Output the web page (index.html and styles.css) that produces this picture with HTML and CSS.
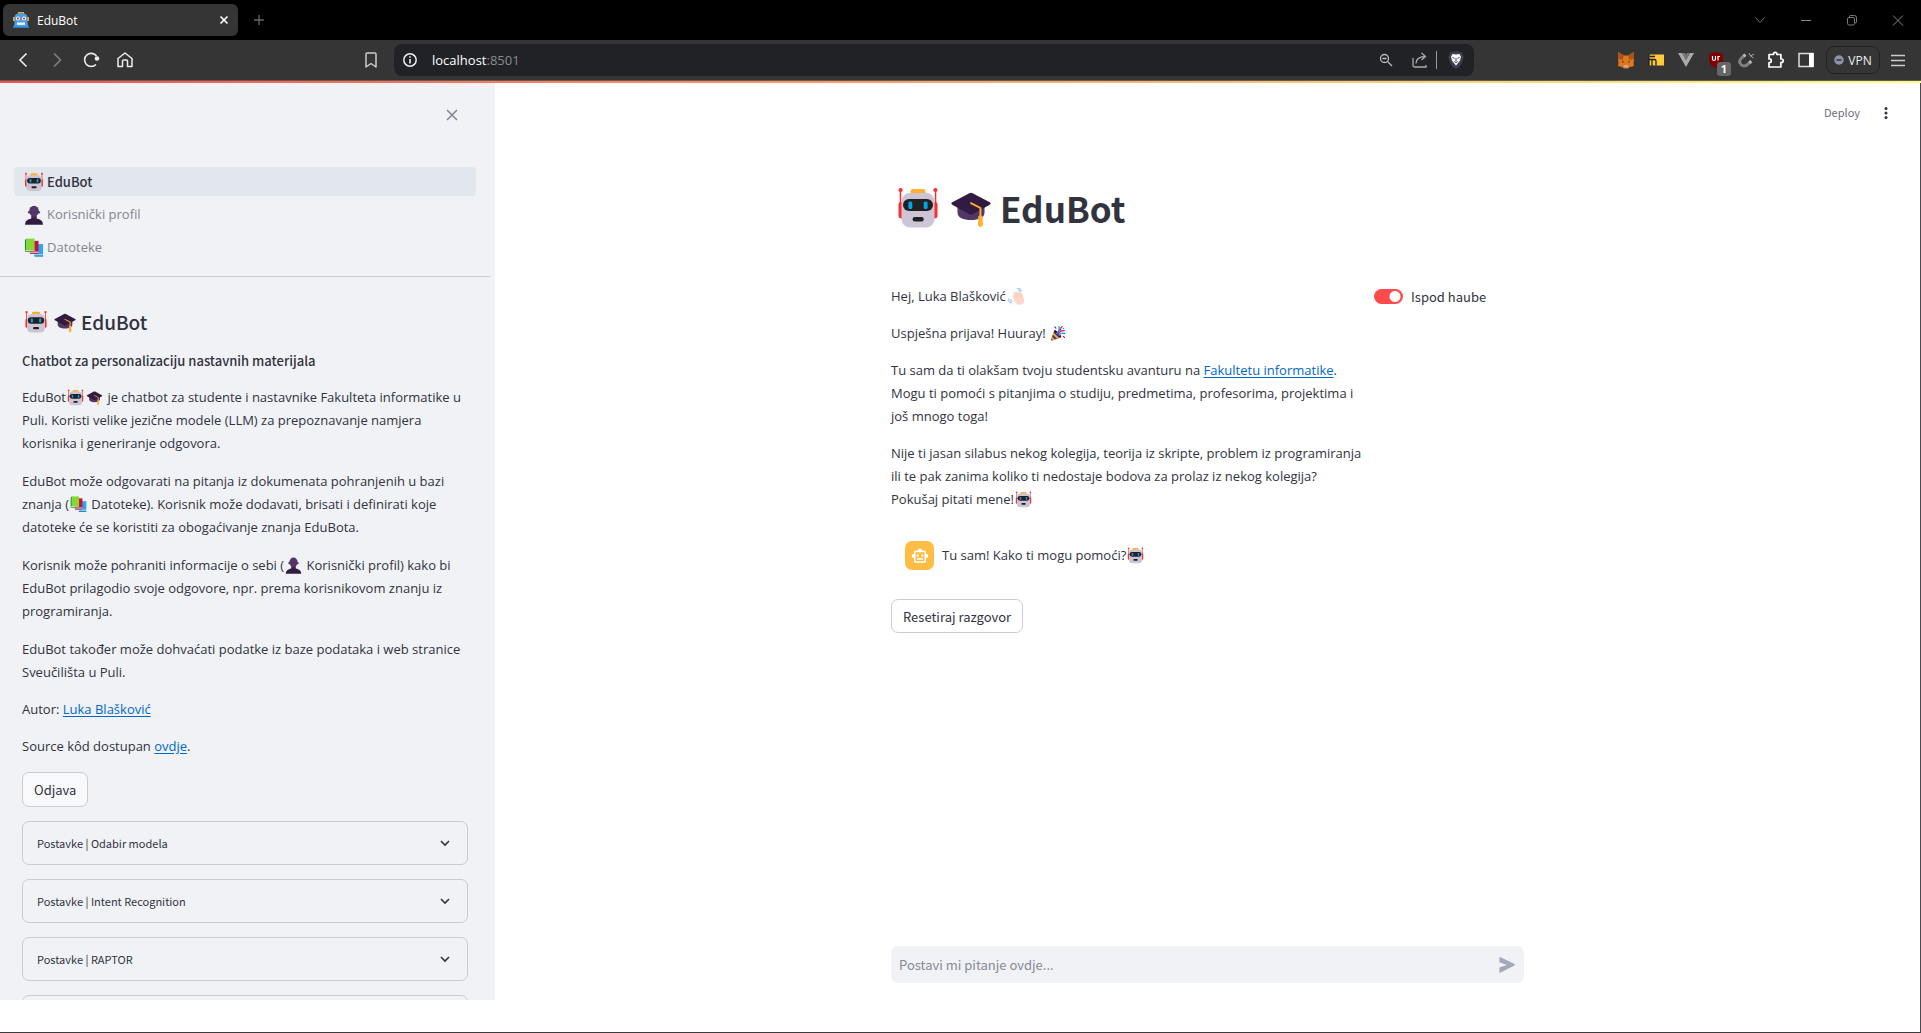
FILE: index.html
```html
<!DOCTYPE html>
<html lang="hr">
<head>
<meta charset="utf-8">
<meta name="viewport" content="width=device-width, initial-scale=1">
<title>EduBot</title>
<link rel="stylesheet" href="styles.css">
</head>
<body>
<svg class="sprite" aria-hidden="true">
  <symbol id="e-robot" viewBox="0 0 32 32">
    <path d="M4.3 4v11M27.7 4v11" stroke="#f8312f" stroke-width="1" fill="none"/>
    <circle cx="4.4" cy="4" r="1.4" fill="#f8312f"/><circle cx="27.6" cy="4" r="1.4" fill="#f8312f"/>
    <rect x="3" y="12" width="4" height="11" rx="1.6" fill="#f8312f"/><rect x="25" y="12" width="4" height="11" rx="1.6" fill="#f8312f"/>
    <rect x="11" y="3.4" width="10" height="5" rx="1.6" fill="#ffb02e"/>
    <rect x="5" y="6" width="22" height="23" rx="5.5" fill="#cdc4d6"/>
    <rect x="6" y="10" width="20" height="8" rx="4" fill="#212121"/>
    <rect x="9.6" y="11.6" width="2.6" height="5" rx="1" fill="#00a6ed"/><rect x="19.8" y="11.6" width="2.6" height="5" rx="1" fill="#00a6ed"/>
    <rect x="12.4" y="22" width="7.4" height="3" rx="1.4" fill="#212121"/>
  </symbol>
  <symbol id="e-cap" viewBox="0 0 32 32">
    <path d="M7 12v7c0 3.500 4 5 9 5s9-1.500 9-5v-7z" fill="#533566"/>
    <path d="M3.500 12.200 14.900 6.100a2.400 2.400 0 0 1 2.200 0l11.400 6.100c.8.400.8 1.200 0 1.600l-11.400 6.300a2.400 2.400 0 0 1-2.200 0L3.500 13.800c-.8-.4-.8-1.200 0-1.600z" fill="#321b41"/>
    <path d="M16 12.800 22.300 16v7" stroke="#ffb02e" stroke-width="1.300" stroke-linecap="round" fill="none"/>
    <path d="M20.700 22.500c0-2.300 3.200-2.300 3.200 0 0 1-.3 1.500-.2 2.300.8 2.400-.2 3.700-1.400 3.700s-2.200-1.300-1.400-3.700c.1-.8-.2-1.300-.2-2.300z" fill="#ffb02e"/>
  </symbol>
  <symbol id="e-bust" viewBox="0 0 32 32">
    <path d="M12 17h8v6h-8z" fill="#432a54"/>
    <ellipse cx="16" cy="10.500" rx="7" ry="8" fill="#533566"/>
    <circle cx="9" cy="12" r="1.800" fill="#533566"/><circle cx="23" cy="12" r="1.800" fill="#533566"/>
    <path d="M3 30c0-5.500 3.500-7.500 9-9h8c5.500 1.500 9 3.500 9 9z" fill="#321b41"/>
  </symbol>
  <symbol id="e-books" viewBox="-1 0 34 34">
    <path d="M17 11h13v15.500H17z" fill="#26a9f0"/><path d="M16 26.500h14V30H17.500z" fill="#8ec6e8"/><path d="M16 28.600h14V30H17z" fill="#0074ba"/>
    <path d="M10 6h13v17H10z" fill="#ca0b4a"/><path d="M8.500 22.500H23V26H10z" fill="#e7aac3"/><path d="M9 24.800h14V26H10z" fill="#990838"/>
    <path d="M2 4.500 3.500 3H5v17H3.500L2 21.500z" fill="#008463"/><path d="M3.500 2.500H17V20H3.500z" fill="#86d72f"/><path d="M2 20h15v2.400H2z" fill="#b8d9a0"/><path d="M2 21.800h15v1.200H2z" fill="#44911b"/>
  </symbol>
  <symbol id="e-wave" viewBox="-2 0 32 32">
    <path d="M11 13 10 9.500c-.5-2 2-2.800 3-1l.8 1.500c.5-2.500 3-2.600 4-.8 1.500-1.600 3.600-.9 4.200.8 1.900-.8 3.300.4 3.700 2l2.600 8c1.700 6-2 10-7 10-4.500 0-7-2.500-8.700-6.200L9.500 18c-.8-2.400.6-4 1.500-5z" fill="#fdd8c8"/>
    <path d="M14 10.500l2.600 7M18 9.500l2.600 7M22 10.500l2 6" stroke="#f3b7a3" stroke-width=".8" fill="none"/>
    <path d="M17 3c3-1.500 6 .5 6.500 3.500M19 6c1.300-.3 2.200.3 2.600 1.500M2.500 20c-.6 3.500 1.600 6.500 5 7M6 20.500c-.2 1.800.6 3 2.200 3.600" stroke="#9bc2fb" stroke-width="1.800" stroke-linecap="round" fill="none"/>
  </symbol>
  <symbol id="e-party" viewBox="-1 -2 36 36">
    <path d="M9 10 3 27c-.5 1.700.8 2.700 2.200 2.200L22 23c2-1-10-15-13-13z" fill="#533566"/>
    <path d="M9 10c-1.200 2.500 9.500 15 13 13 1-3-10-15.500-13-13z" fill="#1c1230"/>
    <path d="m7.500 14-1.300 4 8.200 8 3.600-1.300zM4.700 22l-1.200 3.600 3.400 3 3.400-1.200z" fill="#ffb02e"/>
    <path d="M13.500 16c4-3 6-7 4.500-13M18 20c1-4 5-6 11-4" stroke="#00a6ed" stroke-width="2.600" stroke-linecap="round" fill="none"/>
    <path d="M16 18c2-6 6-8 12-7.500" stroke="#f70a8d" stroke-width="2.600" stroke-linecap="round" fill="none"/>
    <path d="M10 3.500 12 6M21.500 5l2.500-2M20 10l1.500-3M26 21.500l2.500 2" stroke="#ca0b4a" stroke-width="2.200" stroke-linecap="round" fill="none"/>
    <circle cx="26.500" cy="6.500" r="1.400" fill="#00a6ed"/><circle cx="22" cy="16" r="1.300" fill="#ffb02e"/>
  </symbol>
  <symbol id="i-down" viewBox="0 0 16 16"><path d="m4 6 4 4 4-4" fill="none" stroke="currentColor" stroke-width="1.600"/></symbol>
</svg>

<header class="browser">
  <div class="tabs">
    <div class="tab">
      <svg class="icon16" viewBox="0 0 16 16"><path d="M0 5h16v4H0z" fill="#f6a32f"/><path d="M5 0h6v3H5z" fill="#f6a32f"/><path d="M1.500 5Q2 1 8 1t6.500 4v7l1.500 4H0l1.500-4z" fill="#4a9fe0"/><circle cx="5" cy="6.500" r="2" fill="#fff"/><circle cx="11" cy="6.500" r="2" fill="#fff"/><circle cx="5" cy="6.500" r="1.100" fill="#e0242c"/><circle cx="11" cy="6.500" r="1.100" fill="#e0242c"/><path d="M4 10.500h8v2.400H4z" fill="#e9f2fa"/><path d="M0 14.500h16V16H0z" fill="#2d7fc4"/></svg>
      <span class="tab-name">EduBot</span>
      <button class="plain" aria-label="Zatvori karticu"><svg class="icon16" viewBox="0 0 16 16"><path d="m4.500 4.500 7 7m0-7-7 7" stroke="#fff" stroke-width="1.700"/></svg></button>
    </div>
    <button class="plain new-tab" aria-label="Nova kartica"><svg class="icon16" viewBox="0 0 16 16"><path d="M8 3v10M3 8h10" stroke="#666" stroke-width="1.300"/></svg></button>
    <div class="window-controls">
      <button class="plain" aria-label="Pretraži kartice"><svg class="icon16" viewBox="0 0 16 16"><path d="m3.500 5.500 4.500 5 4.500-5" fill="none" stroke="#777"/></svg></button>
      <button class="plain" aria-label="Smanji"><svg class="icon16" viewBox="0 0 16 16"><path d="M3 8.500h10" stroke="#888"/></svg></button>
      <button class="plain" aria-label="Vrati"><svg class="icon16" viewBox="0 0 16 16"><g fill="none" stroke="#777"><rect x="3.500" y="5.500" width="7" height="7.500" rx="1.500"/><path d="M5.500 5.500V4Q5.500 3.500 7 3.500h3.500q2 0 2 2V10q0 1-1.500 1"/></g></svg></button>
      <button class="plain" aria-label="Zatvori"><svg class="icon16" viewBox="0 0 16 16"><path d="m3 3.500 10 10m0-10-10 10" stroke="#888"/></svg></button>
    </div>
  </div>
  <div class="toolbar">
    <nav class="nav-buttons" aria-label="Navigacija preglednika">
      <button class="plain" aria-label="Natrag"><svg class="icon18" viewBox="0 0 18 18"><path d="M12.500 2.500 6 9l6.500 6.500" fill="none" stroke="#eee" stroke-width="1.600"/></svg></button>
      <button class="plain" aria-label="Naprijed"><svg class="icon18" viewBox="0 0 18 18"><path d="M6 2.500 12.500 9 6 15.500" fill="none" stroke="#808080" stroke-width="1.600"/></svg></button>
      <button class="plain" aria-label="Osvježi"><svg class="icon18" viewBox="0 0 18 18"><path d="M14 13.500A6.600 6.600 0 1 1 14.500 5" fill="none" stroke="#eee" stroke-width="1.600"/><circle cx="15" cy="7.500" r="2.300" fill="#eee"/></svg></button>
      <button class="plain" aria-label="Početna"><svg class="icon18" viewBox="0 0 18 18"><path d="M2 7.500 9 2l7 5.500v8h-4.500V10q0-1-1-1h-3q-1 0-1 1v5.500H2z" fill="none" stroke="#eee" stroke-width="1.500" stroke-linejoin="round"/></svg></button>
    </nav>
    <div class="location">
      <button class="plain" aria-label="Dodaj oznaku"><svg class="icon18" viewBox="0 0 18 18"><path d="M4 3q0-1 1-1h8q1 0 1 1v13l-5-3.500L4 16z" fill="none" stroke="#ccc" stroke-width="1.500" stroke-linejoin="round"/></svg></button>
      <div class="address">
        <svg class="icon16" viewBox="0 0 16 16"><circle cx="8" cy="8" r="6.200" fill="none" stroke="#eee" stroke-width="1.500"/><path d="M8 7v4.500M8 4.300v1.500" stroke="#eee" stroke-width="1.600"/></svg>
        <span class="url">localhost<span class="port">:8501</span></span>
        <button class="plain" aria-label="Povećanje"><svg class="icon16" viewBox="0 0 16 16"><g fill="none" stroke="#bbb" stroke-width="1.300"><circle cx="6.500" cy="6.500" r="4"/><path d="M4.500 6.500h4M9.500 9.500 14 14"/></g></svg></button>
        <button class="plain share" aria-label="Dijeli"><svg class="icon18" viewBox="0 0 18 18"><path d="M2 7v7.500q0 1.500 1.500 1.500H15v-2M5 12.500q0-6.500 9-7M10.500 2l4 3.500-4 3.500" fill="none" stroke="#aaa" stroke-width="1.300"/></svg></button>
        <button class="plain brave" aria-label="Brave Shields"><svg class="icon18" viewBox="0 0 18 18"><path d="M3 1.500 9 0l6 1.500 1.500 4Q16 14 9 18 2 14 1.500 5.500z" fill="#3e3f52"/><path d="m5.500 3 3.500.5 3.500-.5 1.500 3-1.300 4L9 14.500 5.300 10 4 6z" fill="#fff"/><path d="m5.500 6.500 2 .8m5-.8-2 .8M9 7v3m-1.800.5 1.800 1 1.800-1" stroke="#3e3f52" fill="none"/></svg></button>
      </div>
    </div>
    <div class="extensions">
      <button class="plain" aria-label="MetaMask"><svg class="icon18" viewBox="0 0 18 18"><path d="m1 1 6 3.500h4L17 1v7l-.5 4 .5 3-4 1-2 1.500H7L5 16l-4-1 .5-3L1 8z" fill="#e2761b"/><path d="m1 1 6 3.500L5.500 9 1 8zM17 1l-6 3.500L12.500 9 17 8z" fill="#a8541b"/><path d="m5.500 9.500 2 2-2.200-.3zm7 0-2 2 2.200-.3z" fill="#233447"/><path d="M7 14h4l.5 2.500H6.500z" fill="#c0ad9e"/></svg></button>
      <button class="plain" aria-label="Bilješke"><svg class="icon18" viewBox="0 0 18 18"><path d="M2 3.500h15v11H2z" fill="#ffc83d"/><path d="M2 3v12M2 8.500h5.500q1.500 0 1.500 1.500v4.500M5 9v6M3 5.500h5" fill="none" stroke="#222" stroke-width="1.300"/></svg></button>
      <button class="plain" aria-label="Vue"><svg class="icon18" viewBox="0 0 18 18"><path d="M1 2h4l4 7 4-7h4L9 16z" fill="#aaa"/><path d="M5 2h3l1 2 1-2h3L9 9z" fill="#777"/></svg></button>
      <button class="plain blocker" aria-label="uBlock"><svg class="icon18" viewBox="0 0 18 18"><path d="m9 1 7 2v6q0 5-7 8-7-3-7-8V3z" fill="#800000"/><path d="M5.500 5v3q0 1.500 1.500 1.500T8.500 8V5M11 9.500v-4h2" fill="none" stroke="#fff" stroke-width="1.200"/></svg><span class="count">1</span></button>
      <button class="plain" aria-label="Magnet"><svg class="icon18" viewBox="0 0 18 18"><path d="M8 4 4.500 7q-3.500 3.500-.5 6.500t6.500 0L14 10.500" fill="none" stroke="#808080" stroke-width="3"/><path d="M8.500 3.500 6.500 5.300m7.800 4.900-2 1.800" stroke="#b5b5b5" stroke-width="3"/><path d="m12 2 1.500 3M17 3l-3.500 2 3 2" fill="none" stroke="#aaa"/></svg></button>
      <button class="plain" aria-label="Proširenja"><svg class="icon18" viewBox="0 0 18 18"><path d="M2 3.500h4.500V3a1.700 1.700 0 0 1 3.400 0v.5h4V8h.6a1.700 1.700 0 0 1 0 3.400h-.6v4.600H2v-4.500h.5a1.800 1.800 0 0 0 0-3.600H2z" fill="none" stroke="#fff" stroke-width="1.700" stroke-linejoin="round"/></svg></button>
      <button class="plain" aria-label="Bočna traka"><svg class="icon18" viewBox="0 0 18 18"><path d="M2 2.500h14v13H2z" fill="none" stroke="#ddd" stroke-width="1.500"/><path d="M12 2h4.700v14H12z" fill="#fff"/></svg></button>
      <button class="vpn"><svg viewBox="0 0 12 12" width="10" height="10"><circle cx="6" cy="6" r="5.700" fill="#8e92ab"/><path d="M3 6h6" stroke="#353535" stroke-width="1.800"/></svg>VPN</button>
      <button class="plain menu" aria-label="Izbornik"><svg class="icon18" viewBox="0 0 18 18"><path d="M2 4.500h14M2 9.500h14M2 14.500h14" stroke="#ccc" stroke-width="1.400"/></svg></button>
    </div>
  </div>
</header>

<div class="app">
  <aside class="sidebar">
    <div class="sidebar-top"><button class="plain" aria-label="Zatvori bočnu traku"><svg class="icon16" viewBox="0 0 16 16"><path d="m3 3 10 10M13 3 3 13" stroke="#808495" stroke-width="1.500"/></svg></button></div>
    <nav class="pages" aria-label="Stranice">
      <a class="page active" href="#"><svg class="emoji"><use href="#e-robot"/></svg>EduBot</a>
      <a class="page" href="#profil"><svg class="emoji"><use href="#e-bust"/></svg>Korisnički profil</a>
      <a class="page" href="#datoteke"><svg class="emoji"><use href="#e-books"/></svg>Datoteke</a>
    </nav>
    <hr>
    <div class="sidebar-body">
      <h2><svg class="emoji"><use href="#e-robot"/></svg><svg class="emoji"><use href="#e-cap"/></svg>EduBot</h2>
      <p class="lead">Chatbot za personalizaciju nastavnih materijala</p>
      <div class="about">
        <p>EduBot<svg class="emoji"><use href="#e-robot"/></svg><svg class="emoji"><use href="#e-cap"/></svg> je chatbot za studente i nastavnike Fakulteta informatike u Puli. Koristi velike jezične modele (LLM) za prepoznavanje namjera korisnika i generiranje odgovora.</p>
        <p>EduBot može odgovarati na pitanja iz dokumenata pohranjenih u bazi znanja (<svg class="emoji"><use href="#e-books"/></svg> Datoteke). Korisnik može dodavati, brisati i definirati koje datoteke će se koristiti za obogaćivanje znanja EduBota.</p>
        <p>Korisnik može pohraniti informacije o sebi (<svg class="emoji"><use href="#e-bust"/></svg> Korisnički profil) kako bi EduBot prilagodio svoje odgovore, npr. prema korisnikovom znanju iz programiranja.</p>
        <p>EduBot također može dohvaćati podatke iz baze podataka i web stranice Sveučilišta u Puli.</p>
      </div>
      <p>Autor: <a href="#autor">Luka Blašković</a></p>
      <p>Source kôd dostupan <a href="#kod">ovdje</a>.</p>
      <button class="btn">Odjava</button>
      <details class="expander"><summary>Postavke | Odabir modela<svg class="icon16"><use href="#i-down"/></svg></summary></details>
      <details class="expander"><summary>Postavke | Intent Recognition<svg class="icon16"><use href="#i-down"/></svg></summary></details>
      <details class="expander"><summary>Postavke | RAPTOR<svg class="icon16"><use href="#i-down"/></svg></summary></details>
      <details class="expander"><summary aria-label="Postavke"></summary></details>
    </div>
  </aside>

  <main class="main">
    <div class="main-top">
      <button class="plain deploy">Deploy</button>
      <button class="plain" aria-label="Izbornik aplikacije"><svg class="icon16" viewBox="0 0 16 16" fill="#31333f"><circle cx="8" cy="3.500" r="1.500"/><circle cx="8" cy="8" r="1.500"/><circle cx="8" cy="12.500" r="1.500"/></svg></button>
    </div>
    <div class="content">
      <h1><svg class="emoji"><use href="#e-robot"/></svg><svg class="emoji"><use href="#e-cap"/></svg>EduBot</h1>
      <div class="columns">
        <div class="intro">
          <p>Hej, Luka Blašković<svg class="emoji"><use href="#e-wave"/></svg></p>
          <p>Uspješna prijava! Huuray! <svg class="emoji"><use href="#e-party"/></svg></p>
          <p>Tu sam da ti olakšam tvoju studentsku avanturu na <a href="#fipu">Fakultetu informatike</a>. Mogu ti pomoći s pitanjima o studiju, predmetima, profesorima, projektima i još mnogo toga!</p>
          <p>Nije ti jasan silabus nekog kolegija, teorija iz skripte, problem iz programiranja ili te pak zanima koliko ti nedostaje bodova za prolaz iz nekog kolegija? Pokušaj pitati mene!<svg class="emoji"><use href="#e-robot"/></svg></p>
        </div>
        <label class="toggle"><input type="checkbox" checked>Ispod haube</label>
      </div>
      <div class="message">
        <span class="avatar"><svg class="icon18" viewBox="0 0 24 24"><path fill="#fff" fill-rule="evenodd" d="M20 9V7c0-1.100-.9-2-2-2h-3c0-1.660-1.340-3-3-3S9 3.340 9 5H6c-1.100 0-2 .9-2 2v2c-1.660 0-3 1.340-3 3s1.340 3 3 3v4c0 1.100.9 2 2 2h12c1.100 0 2-.9 2-2v-4c1.660 0 3-1.340 3-3s-1.340-3-3-3zm-2 10H6V7h12v12zm-9-6c-.83 0-1.500-.67-1.500-1.500S8.170 10 9 10s1.500.67 1.500 1.500S9.830 13 9 13zm7.500-1.500c0 .83-.67 1.500-1.500 1.500s-1.500-.67-1.500-1.500.67-1.500 1.500-1.500 1.500.67 1.500 1.500zM8 15h8v2H8v-2z"/></svg></span>
        <p>Tu sam! Kako ti mogu pomoći?<svg class="emoji"><use href="#e-robot"/></svg></p>
      </div>
      <button class="btn">Resetiraj razgovor</button>
      <form class="chat-input">
        <input type="text" placeholder="Postavi mi pitanje ovdje..." aria-label="Pitanje">
        <button class="plain" type="button" aria-label="Pošalji"><svg class="icon18" viewBox="0 0 18 18"><path d="M1.500 1.500Q1 1 2 1l14.500 7q1 .8 0 1.600L2 16.800q-1 0-.6-1.200v-4L9 9 1.400 6.300z" fill="#a3a8b8"/></svg></button>
      </form>
    </div>
  </main>
</div>
</body>
</html>
```
FILE: styles.css
```css
:root {
  --ink: #31333f;
  --panel: #f0f2f6;
  --line: #cbccd2;
  --link: #0068c9;
  --prose: "Open Sans", "Noto Sans", sans-serif;
  --ui: "Noto Sans CJK SC", "Noto Sans", sans-serif;
}

* { box-sizing: border-box; }

body {
  margin: 0;
  height: 100vh;
  display: flex;
  flex-direction: column;
  overflow: hidden;
  background: #fff;
  color: var(--ink);
  font: 13px/23px var(--prose);
}

p, h1, h2 { margin: 0; }
a { color: var(--link); text-underline-offset: 2px; }
svg { flex: none; }

.sprite { position: absolute; width: 0; height: 0; }
.icon16 { width: 16px; height: 16px; display: block; }
.icon18 { width: 18px; height: 18px; display: block; }
.emoji { width: 19px; height: 19px; vertical-align: -5px; }

.plain {
  display: flex;
  align-items: center;
  justify-content: center;
  padding: 0;
  border: 0;
  background: none;
  color: inherit;
  font: inherit;
}

/* Browser frame */
.browser { flex: none; color: #fff; font-size: 12px; }
.tabs {
  display: flex;
  align-items: center;
  height: 40px;
  padding-left: 3px;
  background: #000;
}
.tab {
  display: flex;
  align-items: center;
  gap: 8px;
  width: 235px;
  height: 32px;
  padding: 0 6px 0 10px;
  border-radius: 6px;
  background: #353535;
}
.tab-name { flex: 1; }
.new-tab { margin-left: 13px; }
.window-controls { display: flex; margin-left: auto; }
.window-controls .plain { width: 46px; height: 40px; }

.toolbar {
  display: grid;
  grid-template-columns: 358fr 1116fr 447fr;
  height: 43px;
  padding-bottom: 3px;
  background:
    linear-gradient(90deg, #ff4b4b, #fffd80) bottom / 100% 2px no-repeat,
    linear-gradient(#5c5c5c, #5c5c5c) 0 40px / 100% 1px no-repeat,
    #353535;
}
.nav-buttons, .location, .extensions { display: flex; align-items: center; min-width: 0; }
.nav-buttons { gap: 16px; padding-left: 14px; }
.location { gap: 14px; padding-left: 4px; }
.address {
  flex: 1;
  display: flex;
  align-items: center;
  height: 32px;
  padding: 0 9px 0 8px;
  border-radius: 8px;
  background: #212226;
}
.url { flex: 1; padding-left: 14px; font-size: 13px; }
.port { color: #8b8b8b; }
.share { margin: 0 7px 0 17px; }
.brave { padding-left: 10px; border-left: 1px solid #999; }
.extensions { justify-content: flex-end; padding-right: 5px; }
.extensions .plain { width: 30px; height: 32px; }
.blocker { position: relative; }
.count {
  position: absolute;
  right: 0;
  bottom: 0;
  width: 14px;
  height: 14px;
  border-radius: 3px;
  background: #666;
  font: bold 11px/14px var(--prose);
}
.vpn {
  display: flex;
  align-items: center;
  justify-content: center;
  gap: 4px;
  width: 54px;
  height: 28px;
  margin-left: 5px;
  padding: 0;
  border: 1px solid #232323;
  border-radius: 8px;
  background: none;
  color: #eee;
  font: 12px var(--prose);
}
.extensions .menu { width: 36px; }

/* App */
.app {
  flex: 1;
  min-height: 0;
  display: grid;
  grid-template-columns: 495px minmax(0, 1fr);
  padding-bottom: 32px;
  border-right: 1px solid #4a4a50;
  border-bottom: 1px solid #3c3a3a;
}
.sidebar { overflow: hidden; background: var(--panel); }
.sidebar-top {
  display: flex;
  justify-content: flex-end;
  height: 84px;
  padding: 24px 35px 0 0;
}
.sidebar-top .plain { height: 16px; }
.pages { display: grid; gap: 4px; padding: 0 19px 0 14px; }
.page {
  display: flex;
  align-items: center;
  gap: 2px;
  height: 29px;
  padding-left: 9px;
  border-radius: 4px;
  color: #85868e;
  text-decoration: none;
}
.page .emoji { width: 22px; height: 22px; }
.page.active { background: #e2e6ed; color: var(--ink); font-family: var(--ui); font-weight: 500; }
hr { width: 490px; margin: 14px 0 0; border: 0; border-top: 1px solid var(--line); }

.sidebar-body {
  display: flex;
  flex-direction: column;
  align-items: stretch;
  gap: 14px;
  padding: 32px 27px 0 22px;
}
.sidebar-body .btn { align-self: flex-start; }
h2 {
  display: flex;
  align-items: center;
  gap: 3px;
  padding-left: 1px;
  font: 500 19px/24px var(--ui);
}
h2 .emoji { width: 26px; height: 26px; }
.lead { font-family: var(--ui); font-weight: 500; }
.about { display: grid; gap: 15px; }

.btn {
  height: 35px;
  padding: 0 11px;
  border: 1px solid var(--line);
  border-radius: 7px;
  background: #f9f9fb;
  color: var(--ink);
  font: 13px/23px var(--ui);
}
.expander { border: 1px solid var(--line); border-radius: 7px; }
.expander summary {
  display: flex;
  align-items: center;
  justify-content: space-between;
  height: 42px;
  padding: 0 14px;
  list-style: none;
  font: 11px/23px var(--ui);
}

.main { display: flex; flex-direction: column; min-width: 0; }
.main-top {
  display: flex;
  justify-content: flex-end;
  align-items: center;
  gap: 18px;
  height: 59px;
  padding-right: 26px;
}
.deploy { color: #6b6d76; font: 11px/23px var(--ui); }
.content {
  flex: 1;
  display: flex;
  flex-direction: column;
  align-items: flex-start;
  width: 100%;
  max-width: 633px;
  margin: 0 auto;
  padding: 42px 0 17px;
}
h1 {
  display: flex;
  align-items: center;
  gap: 5px;
  padding-left: 3px;
  font: 700 35px/46px var(--ui);
}
h1 .emoji { width: 48px; height: 48px; }
.columns {
  display: grid;
  grid-template-columns: minmax(0, 19fr) minmax(0, 6fr);
  gap: 8px;
  width: 100%;
  margin-top: 53px;
}
.intro { display: grid; gap: 14px; }
.toggle { display: flex; align-items: center; gap: 8px; height: 23px; font-family: var(--ui); }
.toggle input {
  appearance: none;
  flex: none;
  width: 29px;
  height: 15px;
  margin: 0;
  border-radius: 8px;
  background: radial-gradient(circle at 21px 50%, #fff 5px, #ff4b4b 6px);
}
.message { display: flex; align-items: center; gap: 8px; margin: 30px 0 29px; padding-left: 14px; }
.avatar {
  display: grid;
  place-items: center;
  width: 29px;
  height: 29px;
  border-radius: 7px;
  background: #ffbd45;
}
.content .btn { height: 34px; background: #fff; }
.chat-input {
  display: flex;
  align-items: center;
  width: 100%;
  height: 37px;
  margin-top: auto;
  padding: 0 8px;
  border-radius: 7px;
  background: var(--panel);
}
.chat-input input {
  flex: 1;
  min-width: 0;
  padding: 0;
  border: 0;
  outline: 0;
  background: none;
  color: var(--ink);
  font: 13px/23px var(--ui);
}
.chat-input input::placeholder { color: #888a95; opacity: 1; }
```
